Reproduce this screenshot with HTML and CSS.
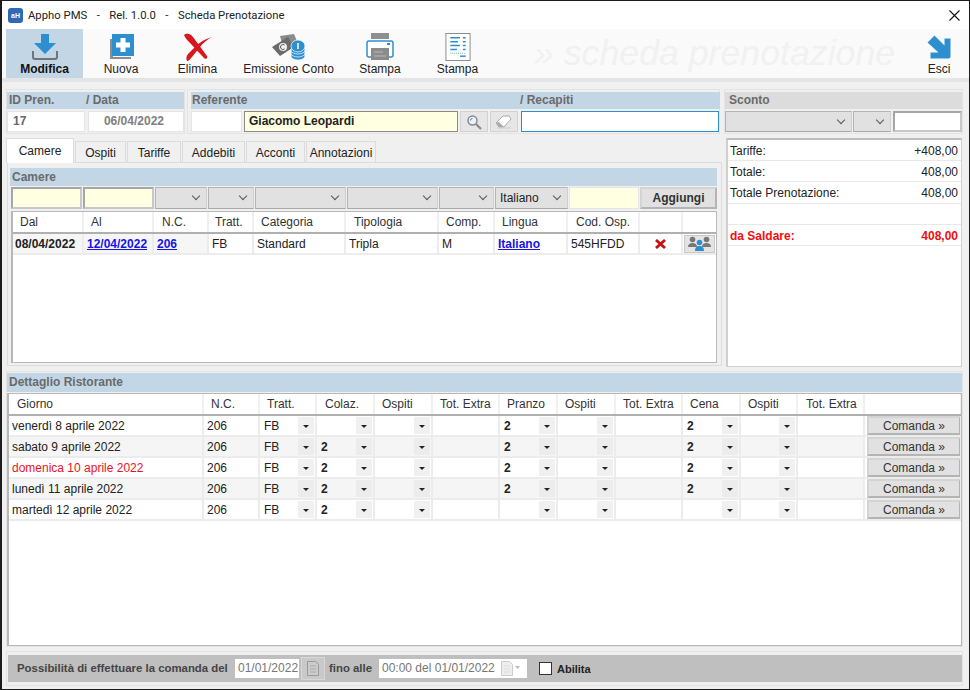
FILE: index.html
```html
<!DOCTYPE html>
<html lang="it">
<head>
<meta charset="utf-8">
<title>Scheda Prenotazione</title>
<link rel="stylesheet" href="styles.css">
</head>
<body>
<div class="window">
  <header class="titlebar">
    <span class="logo">aH</span>
    <span class="title">Appho PMS</span><span class="title sep">-</span><span class="title">Rel. 1.0.0</span><span class="title sep">-</span><span class="title">Scheda Prenotazione</span>
    <svg class="close" width="11" height="11" viewBox="0 0 11 11"><path d="M.5.5l10 10M10.5.5l-10 10" stroke="#111" stroke-width="1.1" fill="none"/></svg>
  </header>
  <nav class="toolbar">
    <div class="tool active">
      <svg width="28" height="28" viewBox="0 0 28 28"><path d="M2 18v6a2 2 0 0 0 2 2h20a2 2 0 0 0 2-2v-6" fill="none" stroke="#6f7478" stroke-width="2"/><path d="M10 1h8v9h7L14 21 3 10h7z" fill="#2e8fd0"/></svg>
      <span>Modifica</span>
    </div>
    <div class="tool narrow">
      <svg width="28" height="28" viewBox="0 0 28 28"><path d="M3 6h3v18h18v2H3z" fill="#8d8d8d"/><rect x="5" y="1" width="22" height="22" fill="#2e8fd0"/><path d="M13.500 5h5v4.500H23v5h-4.500V19h-5v-4.500H9v-5h4.500z" fill="#fff"/></svg>
      <span>Nuova</span>
    </div>
    <div class="tool">
      <svg width="30" height="28" viewBox="0 0 30 28"><path d="M1 2C3 0 7 0 10 4l14 19c1 2-1 4-3 2L8 11C5 8 2 5 1 2z" fill="#d9161d"/><path d="M29 4c-7 2-12 5-16 9l-8 8c-2 3-2 5-1 7 2 0 3-2 5-4l8-10c3-4 8-8 12-10z" fill="#d9161d"/></svg>
      <span>Elimina</span>
    </div>
    <div class="tool wide">
      <svg width="36" height="28" viewBox="0 0 36 28"><path d="M9 3L23 1l5 12-15 5z" fill="#8a8a8a"/><path d="M1 14L17 4l6 10-14 9z" fill="#6a6a6a"/><circle cx="12" cy="14" r="4" fill="#eee"/><path d="M13.500 12a2.500 2.500 0 1 0 0 4" stroke="#555" fill="none"/><g fill="#2e8fd0" stroke="#fff" stroke-width=".7"><ellipse cx="27" cy="23" rx="7" ry="4"/><ellipse cx="27" cy="20" rx="7" ry="4"/><ellipse cx="27" cy="17" rx="7" ry="4"/><ellipse cx="27" cy="13" rx="7" ry="6"/></g><path d="M27 10v6" stroke="#fff" stroke-width="1.500"/></svg>
      <span>Emissione Conto</span>
    </div>
    <div class="tool print">
      <svg width="28" height="28" viewBox="0 0 28 28"><rect x="5" y="0" width="18" height="6" fill="#8f8f8f"/><path d="M5 24H3a2 2 0 0 1-2-2V10a2 2 0 0 1 2-2h22a2 2 0 0 1 2 2v12a2 2 0 0 1-2 2h-2" fill="#fff" stroke="#2e8fd0" stroke-width="1.500"/><rect x="5" y="15" width="18" height="12" fill="#8b8b8b"/><path d="M8 19h9M8 23h12" stroke="#bbb"/><rect x="21" y="10" width="3" height="2" fill="#2e8fd0"/></svg>
      <span>Stampa</span>
    </div>
    <div class="tool">
      <svg width="26" height="29" viewBox="0 0 26 29"><rect x=".5" y=".5" width="25" height="28" fill="#fff" stroke="#8a8a8a"/><path d="M5 5h10M5 9h8M5 13h10M5 17h7" stroke="#2e8fd0" stroke-width="1.500"/><path d="M18 5h3M18 9h3M18 13h3M18 17h3" stroke="#2e8fd0" stroke-width="1.500"/><path d="M5 21h16" stroke="#8aa" stroke-dasharray="1 1"/><path d="M15 24h6" stroke="#2e8fd0" stroke-width="1.500"/></svg>
      <span>Stampa</span>
    </div>
    <div class="watermark">» scheda prenotazione</div>
    <div class="tool exit">
      <svg width="24" height="24" viewBox="0 0 24 24"><path d="M0 7l7-7 10 10V3h6v18a2 2 0 0 1-2 2H3v-6h8z" fill="#2e8fd0" transform="translate(.5 .5)"/></svg>
      <span>Esci</span>
    </div>
  </nav>
  <div class="strip"></div>
  <main class="main">
    <section class="top-row">
      <div class="panel p-id">
        <div class="hdr hdr-id"><span>ID Pren.</span><span>/ Data</span></div>
        <div class="fields f-id">
          <div class="inp val">17</div>
          <div class="inp val date">06/04/2022</div>
        </div>
      </div>
      <div class="panel p-ref">
        <div class="hdr hdr-ref"><span>Referente</span><span>/ Recapiti</span></div>
        <div class="fields f-ref">
          <div class="inp"></div>
          <div class="inp yellow strong">Giacomo Leopardi</div>
          <div class="iconbtn"><svg width="16" height="16" viewBox="0 0 16 16"><circle cx="6.500" cy="6.500" r="4.500" fill="#eef" stroke="#8a8a8a" stroke-width="1.500"/><path d="M4.500 6.500a2 2 0 0 1 2-2" stroke="#2e8fd0" fill="none"/><path d="M10 10l5 5" stroke="#8a8a8a" stroke-width="2.200"/></svg></div>
          <div class="iconbtn"><svg width="18" height="14" viewBox="0 0 18 14"><path d="M1 8l7-7h6l2 3-7 8H4z" fill="#fff" stroke="#aaa"/><path d="M1 8l3-1 5 5H4z" fill="#aaa"/><path d="M2 13h14" stroke="#ccc"/></svg></div>
          <div class="inp focus"></div>
        </div>
      </div>
      <div class="panel p-sc">
        <div class="hdr gray"><span>Sconto</span></div>
        <div class="fields f-sc">
          <div class="sel"></div>
          <div class="sel"></div>
          <div class="inp boxed"></div>
        </div>
      </div>
    </section>
    <section class="mid-row">
      <div class="left-col">
        <div class="tabs">
          <div class="tab on">Camere</div>
          <div class="tab t-os">Ospiti</div>
          <div class="tab t-ta">Tariffe</div>
          <div class="tab t-ad">Addebiti</div>
          <div class="tab t-ac">Acconti</div>
          <div class="tab t-an">Annotazioni</div>
        </div>
        <div class="tabpanel">
          <div class="hdr sub"><span>Camere</span></div>
          <div class="filters">
            <div class="inp yellow boxed"></div>
            <div class="inp yellow boxed"></div>
            <div class="sel"></div>
            <div class="sel"></div>
            <div class="sel"></div>
            <div class="sel"></div>
            <div class="sel"></div>
            <div class="sel">Italiano</div>
            <div class="inp yellow"></div>
            <div class="btn bold">Aggiungi</div>
          </div>
          <div class="tablewrap t-cam">
            <table class="grid g-cam">
              <colgroup><col class="w70"><col class="w70"><col class="w55"><col class="w45"><col class="w92"><col class="w93"><col class="w56"><col class="w73"><col class="w72"><col class="w43"><col class="w35"></colgroup>
              <thead><tr><th class="in7">Dal</th><th class="in7">Al</th><th class="in8">N.C.</th><th class="in6">Tratt.</th><th class="in7">Categoria</th><th class="in8">Tipologia</th><th class="in7">Comp.</th><th class="in7">Lingua</th><th class="in8">Cod. Osp.</th><th></th><th></th></tr></thead>
              <tbody><tr>
                <td class="shade bold first">08/04/2022</td><td class="shade"><a class="lnk">12/04/2022</a></td><td class="shade"><a class="lnk">206</a></td><td>FB</td><td>Standard</td><td>Tripla</td><td>M</td><td><a class="lnk">Italiano</a></td><td>545HFDD</td>
                <td class="ctr"><svg width="11" height="10" viewBox="0 0 11 10"><path d="M1 1l9 8M10 1L1 9" stroke="#c80f0f" stroke-width="2.800"/></svg></td>
                <td class="ctr"><span class="guests"><svg width="25" height="15" viewBox="0 0 25 15"><g fill="#777"><circle cx="5.500" cy="3.500" r="2.800"/><path d="M1 11c0-3 2-4 4.500-4S10 8 10 11z"/><circle cx="19.500" cy="3.500" r="2.800"/><path d="M15 11c0-3 2-4 4.500-4s4.500 1 4.500 4z"/></g><g fill="#2e8fd0"><circle cx="12.500" cy="6.500" r="2.800"/><path d="M8 15c0-4 2-5 4.500-5s4.500 1 4.500 5z"/></g></svg></span></td>
              </tr></tbody>
            </table>
          </div>
        </div>
      </div>
      <aside class="totals">
        <div class="trow"><span>Tariffe:</span><span>+408,00</span></div>
        <div class="trow"><span>Totale:</span><span>408,00</span></div>
        <div class="trow"><span>Totale Prenotazione:</span><span>408,00</span></div>
        <div class="trow"></div>
        <div class="trow due"><span>da Saldare:</span><span>408,00</span></div>
      </aside>
    </section>
    <section class="panel p-rist">
      <div class="hdr sub2"><span>Dettaglio Ristorante</span></div>
      <div class="tablewrap t-ris">
        <table class="grid g-ris">
          <colgroup><col class="w194"><col class="w56"><col class="w57"><col class="w58"><col class="w58"><col class="w67"><col class="w58"><col class="w58"><col class="w67"><col class="w58"><col class="w57"><col class="w67"><col class="w97"></colgroup>
          <thead><tr><th class="in8">Giorno</th><th class="in7">N.C.</th><th class="in7">Tratt.</th><th class="in8">Colaz.</th><th class="in7">Ospiti</th><th class="in7">Tot. Extra</th><th class="in7">Pranzo</th><th class="in7">Ospiti</th><th class="in7">Tot. Extra</th><th class="in7">Cena</th><th class="in7">Ospiti</th><th class="in8">Tot. Extra</th><th></th></tr></thead>
          <tbody>
            <tr><td>venerdì 8 aprile 2022</td><td>206</td><td class="dd">FB</td><td class="dd"></td><td class="dd"></td><td></td><td class="dd bold">2</td><td class="dd"></td><td></td><td class="dd bold">2</td><td class="dd"></td><td></td><td class="cmd"><div class="btn">Comanda »</div></td></tr>
            <tr class="alt"><td>sabato 9 aprile 2022</td><td>206</td><td class="dd">FB</td><td class="dd bold">2</td><td class="dd"></td><td></td><td class="dd bold">2</td><td class="dd"></td><td></td><td class="dd bold">2</td><td class="dd"></td><td></td><td class="cmd"><div class="btn">Comanda »</div></td></tr>
            <tr><td class="red">domenica 10 aprile 2022</td><td>206</td><td class="dd">FB</td><td class="dd bold">2</td><td class="dd"></td><td></td><td class="dd bold">2</td><td class="dd"></td><td></td><td class="dd bold">2</td><td class="dd"></td><td></td><td class="cmd"><div class="btn">Comanda »</div></td></tr>
            <tr class="alt"><td>lunedì 11 aprile 2022</td><td>206</td><td class="dd">FB</td><td class="dd bold">2</td><td class="dd"></td><td></td><td class="dd bold">2</td><td class="dd"></td><td></td><td class="dd bold">2</td><td class="dd"></td><td></td><td class="cmd"><div class="btn">Comanda »</div></td></tr>
            <tr><td>martedì 12 aprile 2022</td><td>206</td><td class="dd">FB</td><td class="dd bold">2</td><td class="dd"></td><td></td><td class="dd"></td><td class="dd"></td><td></td><td class="dd"></td><td class="dd"></td><td></td><td class="cmd"><div class="btn">Comanda »</div></td></tr>
          </tbody>
        </table>
      </div>
    </section>
    <section class="panel p-bar">
      <div class="bar">
        <span class="lab l1">Possibilità di effettuare la comanda del</span>
        <div class="binp b1">01/01/2022</div>
        <div class="calbtn"><svg width="12" height="15" viewBox="0 0 12 15"><path d="M.5.5h8l3 3v11H.5z" fill="#ccc" stroke="#999"/><path d="M3 5h6M3 8h6M3 11h6" stroke="#aaa"/></svg></div>
        <span class="lab l2">fino alle</span>
        <div class="binp b2">00:00 del 01/01/2022<svg width="20" height="15" viewBox="0 0 20 15"><path d="M.5.5h8l3 3v11H.5z" fill="#eee" stroke="#ccc"/><path d="M3 5h6M3 8h6M3 11h6" stroke="#ddd"/><path d="M14 5h5l-2.500 3z" fill="#bbb"/></svg></div>
        <span class="check"></span>
        <span class="abil">Abilita</span>
      </div>
    </section>
  </main>
</div>
</body>
</html>
```
FILE: styles.css
```css
* { box-sizing: border-box; }
html, body { margin: 0; padding: 0; }
body { width: 970px; height: 690px; overflow: hidden; font: 12px "Liberation Sans", Arial, sans-serif; color: #222; background: #f0f0f0; }
.window { width: 970px; height: 690px; border: 1px solid #1c1c1c; border-left-width: 2px; display: flex; flex-direction: column; background: #f0f0f0; }

.titlebar { height: 28px; background: #fff; display: flex; align-items: center; padding-left: 6px; font: 12px Roboto, "Open Sans", sans-serif; color: #222; flex: none; }
.logo { width: 15px; height: 15px; border-radius: 3px; background: #2f68b4; color: #fff; font: bold 7px/15px "Liberation Sans", sans-serif; text-align: center; margin-right: 5px; }
.title { white-space: nowrap; font-size: 11.3px; }
.sep { margin: 0 9.500px; }
.close { margin-left: auto; margin-right: 9px; }

.toolbar { height: 49px; flex: none; background: #fafafa; display: flex; padding-left: 4px; }
.tool { width: 77px; display: flex; flex-direction: column; align-items: center; justify-content: space-between; padding: 4px 0 2px; font-size: 12px; color: #222; flex: none; }
.tool svg { height: 28px; }
.tool.active { background: #c3d6e6; font-weight: bold; color: #111; }
.tool.narrow { width: 76px; }
.tool.wide { width: 105px; }
.tool.print { width: 78px; }
.tool.exit { width: 42px; padding-top: 6px; margin-left: 21px; }
.tool.exit svg { height: 24px; }
.watermark { font: italic 35.7px "Liberation Sans", sans-serif; color: #f1f1f1; white-space: nowrap; margin-left: 38px; width: 363px; line-height: 49px; flex: none; }

.strip { height: 4px; background: #e4e4e4; flex: none; }
.main { flex: 1; padding: 7px 5px 0 4px; display: flex; flex-direction: column; min-height: 0; }

.panel { border: 1px solid #e3e3e3; background: #f0f0f0; }
.top-row { display: flex; height: 45px; flex: none; }
.p-id { width: 179px; padding: 2px 0 0; }
.p-ref { width: 533px; margin-left: 2px; padding: 2px 0 0 3px; }
.p-sc { width: 239px; margin-left: 4px; padding: 2px 0 0; }
.hdr { height: 17px; line-height: 17px; background: #c3d6e6; color: #6a6a6a; font-weight: bold; font-size: 12px; padding-left: 2px; display: flex; white-space: nowrap; }
.hdr.gray { background: #dcdcdc; padding-left: 4px; }
.hdr-id span:first-child { width: 77px; font-weight: bold; }
.hdr-ref { width: 529px; padding-left: 1px; }
.hdr-ref span:first-child { width: 328px; }
.fields { display: flex; margin-top: 2px; height: 21px; }
.f-id { gap: 3px; }
.f-id .inp:first-child { width: 78px; }
.f-id .inp:last-child { width: 96px; }
.inp { background: #fff; height: 21px; line-height: 19px; padding-left: 5px; border: 1px solid #e4e4e4; font-size: 12px; flex: none; }
.val { font-weight: bold; color: #666; }
.date { color: #808080; text-align: right; padding-right: 19px; }
.f-ref { gap: 2px; }
.f-ref .inp:nth-child(1) { width: 51px; }
.f-ref .inp:nth-child(2) { width: 214px; padding-left: 4px; }
.f-ref .inp:nth-child(5) { width: 198px; margin-left: 1px; }
.yellow { background: #ffffe1; }
.strong { font-weight: bold; color: #222; border: 1px solid #8a8a8a; }
.focus { border: 1px solid #2e8fd0; }
.boxed { border: 2px solid #a6a6a6; border-right-color: #c8c8c8; border-bottom-color: #c8c8c8; }
.iconbtn { width: 28px; height: 21px; flex: none; background: #e6e6e6; border: 1px solid #d2d2d2; display: flex; align-items: center; justify-content: center; }
.f-sc { gap: 1px; }
.f-sc .sel:nth-child(1) { width: 127px; }
.f-sc .sel:nth-child(2) { width: 38px; margin-right: 1px; }
.f-sc .inp { width: 69px; }
.sel { height: 21px; line-height: 19px; background: #e1e1e1; border: 1px solid #b4b4b4; border-right-color: #cfcfcf; border-bottom-color: #a8a8a8; position: relative; padding-left: 4px; flex: none; font-size: 12px; }
.sel::after { content: ""; position: absolute; right: 7px; top: 5px; width: 5px; height: 5px; border-right: 1px solid #555; border-bottom: 1px solid #555; transform: rotate(45deg); }

.mid-row { display: flex; margin-top: 4px; height: 229px; flex: none; }
.left-col { width: 716px; display: flex; flex-direction: column; flex: none; }
.tabs { display: flex; height: 25px; flex: none; position: relative; z-index: 1; margin-left: -1px; }
.tab { height: 21px; margin-top: 3px; margin-left: 1px; background: #f0f0f0; border: 1px solid #dcdcdc; border-bottom: none; line-height: 23px; text-align: center; font-size: 12px; color: #222; flex: none; }
.tab.on { height: 25px; margin-top: 0; width: 68px; background: #fff; line-height: 24px; margin-left: 1px; }
.t-os { width: 51px; }
.t-ta { width: 54px; }
.t-ad { width: 63px; }
.t-ac { width: 59px; }
.t-an { width: 70px; }
.tabpanel { height: 204px; margin-left: 1px; margin-top: -1px; width: 715px; border: 1px solid #dcdcdc; padding: 5px 3px 0 2px; background: #f0f0f0; }
.hdr.sub { height: 18px; line-height: 18px; width: 707px; }
.filters { display: grid; grid-template-columns: 71px 71px 52px 46px 91px 91px 55px 73px 70px 77px; column-gap: 1px; margin: 1px 0 0 1px; height: 22px; }
.filters .sel, .filters .inp { height: 22px; width: auto; line-height: 20px; }
.btn { background: #e1e1e1; border: 2px solid; border-color: #d4d4d4 #b4b4b4 #b4b4b4 #d4d4d4; text-align: center; font-size: 12px; height: 22px; line-height: 18px; color: #333; }
.bold { font-weight: bold; }

.tablewrap { background: #fff; border: 1px solid #b8b8b8; border-left-width: 2px; overflow: hidden; }
.t-cam { margin: 2px 0 0 1px; width: 706px; height: 152px; }
.grid { border-collapse: collapse; table-layout: fixed; }
.g-cam { width: 704px; }
.g-ris { width: 952px; }
.grid th { height: 21px; font-weight: normal; text-align: left; color: #333; border-right: 2px solid #f0f0f0; border-bottom: 2px solid #b0b0b0; padding: 0; white-space: nowrap; font-size: 12px; }
.grid td { height: 21px; padding: 0 0 0 3px; border-right: 2px solid #ececec; border-bottom: 2px solid #ececec; white-space: nowrap; font-size: 12px; color: #222; overflow: hidden; }
.grid td.first { padding-left: 2px; }
.in6 { padding-left: 6px !important; }
.in7 { padding-left: 7px !important; }
.in8 { padding-left: 8px !important; }
.shade { background: #f6f6f6; }
.grid td.bold { font-weight: bold; }
.grid .lnk { color: #1414e6; font-weight: bold; text-decoration: underline; }
.grid td.ctr { text-align: center; padding: 0; }
.guests { display: inline-flex; width: 31px; height: 18px; background: #e4e4e4; border: 1px solid #c8c8c8; align-items: center; justify-content: center; vertical-align: middle; }
.guests svg, .ctr svg { vertical-align: middle; }
.w35 { width: 35px; } .w43 { width: 43px; } .w45 { width: 45px; } .w55 { width: 55px; } .w56 { width: 56px; } .w57 { width: 57px; } .w58 { width: 58px; } .w67 { width: 67px; } .w70 { width: 70px; } .w72 { width: 72px; } .w73 { width: 73px; } .w92 { width: 92px; } .w93 { width: 93px; } .w97 { width: 97px; } .w194 { width: 194px; }

.totals { width: 236px; height: 229px; margin-left: 4px; background: #fff; border: 1px solid #cfcfcf; border-top: 2px solid #bdbdbd; border-left-width: 2px; flex: none; }
.trow { height: 21px; display: flex; justify-content: space-between; align-items: center; padding: 1px 3px 0 2px; border-bottom: 1px solid #e8e8e8; color: #222; font-size: 12px; }
.trow:nth-child(3) { height: 22px; }
.due { color: #f00d0d; font-weight: bold; }

.p-rist { margin-top: 4px; height: 276px; width: 957px; padding: 1px 0 0 0; flex: none; }
.hdr.sub2 { height: 19px; line-height: 19px; }
.t-ris { margin-top: 1px; height: 253px; }
.dd { position: relative; padding-left: 4px !important; }
.dd::before { content: ""; position: absolute; right: 1px; top: 1px; bottom: 1px; width: 16px; background: #f0f0f0; }
.dd::after { content: ""; position: absolute; right: 6px; top: 9px; border: 3px solid transparent; border-top: 3px solid #222; border-bottom: 0; }
.alt td { background: #f5f5f5; }
.alt td.dd::before { background: #ececec; }
.grid td.red { color: #f0101e; }
.grid td.cmd { padding: 0 0 0 2px; background: #fff; }
.cmd .btn { height: 19px; line-height: 16px; width: 94px; color: #333; }

.p-bar { margin-top: 4px; height: 35px; width: 957px; padding: 3px 0 0 1px; flex: none; }
.bar { height: 27px; background: #bfbfbf; display: flex; align-items: center; padding-left: 9px; font-size: 11px; }
.lab { font-weight: bold; color: #444; white-space: nowrap; font-size: 11.4px; line-height: 25px; }
.l1 { width: 211px; }
.binp { background: #fff; height: 19px; line-height: 19px; color: #777; padding-left: 3px; flex: none; display: flex; align-items: center; white-space: nowrap; font-size: 12px; }
.b1 { width: 64px; margin-left: 7px; }
.calbtn { width: 24px; height: 23px; margin-left: 2px; background: #c9c9c9; border: 1px solid #d8d8d8; display: flex; align-items: center; justify-content: center; flex: none; }
.l2 { margin-left: 4px; width: 43px; }
.b2 { width: 148px; margin-left: 7px; justify-content: space-between; padding-right: 6px; }
.check { width: 13px; height: 13px; background: #fff; border: 1px solid #333; margin-left: 12px; flex: none; }
.abil { font-weight: bold; color: #222; margin-left: 5px; font-size: 11px; }
```
